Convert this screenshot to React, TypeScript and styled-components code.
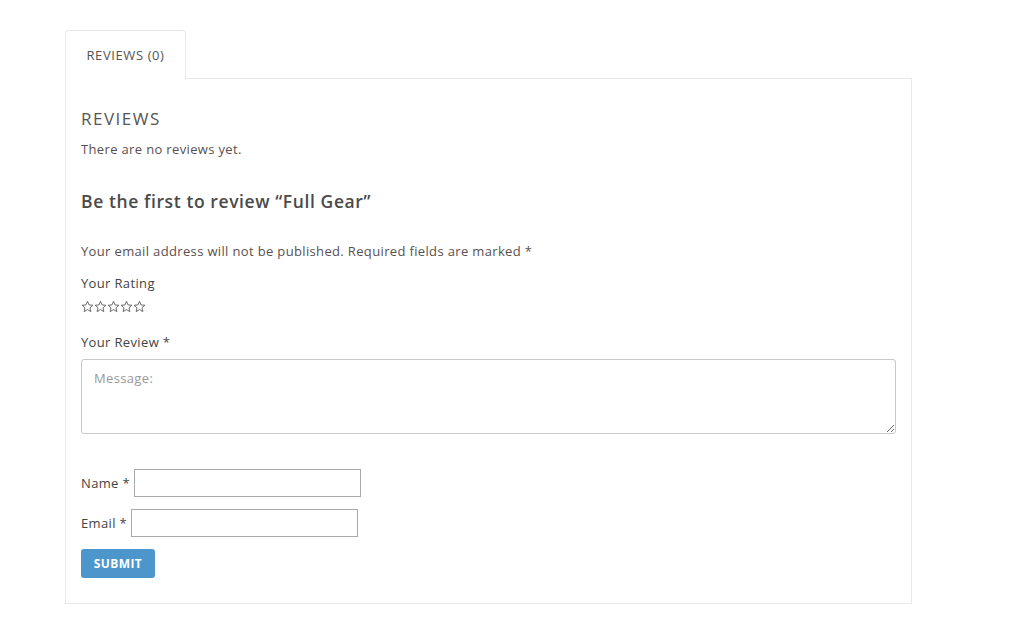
import React from "react";
import styled, { createGlobalStyle } from "styled-components";

const Global = createGlobalStyle`
  html, body { margin: 0; padding: 0; background: #fff; }
  body { font-family: "Open Sans", "Liberation Sans", sans-serif; color: #555; }
  * { box-sizing: border-box; }
`;

const Page = styled.div`
  padding: 30px 0 0 65px;
  width: 912px;
`;

const Tabs = styled.div`
  display: flex;
`;

const Tab = styled.div`
  width: 121px;
  height: 49px;
  border: 1px solid #e8e8e8;
  border-bottom: none;
  border-radius: 4px 4px 0 0;
  background: #fff;
  margin-bottom: -1px;
  position: relative;
  z-index: 1;
  display: flex;
  align-items: center;
  justify-content: center;
  font-size: 13px;
  color: #555;
  letter-spacing: 0.6px;
`;

const Panel = styled.div`
  border: 1px solid #e8e8e8;
  padding: 28px 15px 25px 15px;
  height: 526px;
`;

const Heading = styled.h2`
  margin: 0;
  font-size: 17px;
  font-weight: 400;
  color: #555;
  line-height: 24px;
  letter-spacing: 1.5px;
`;

const Text = styled.p<{ $mt?: number }>`
  margin: ${(p) => p.$mt ?? 0}px 0 0;
  font-size: 13px;
  line-height: 20px;
  color: #5a5050;
  letter-spacing: 0.35px;
`;

const SubHeading = styled.h3`
  margin: 30px 0 0;
  font-size: 17.5px;
  font-weight: 600;
  color: #4a4a4a;
  line-height: 24px;
  letter-spacing: 0.6px;
`;

const Label = styled.div<{ $mt: number }>`
  margin-top: ${(p) => p.$mt}px;
  font-size: 13px;
  line-height: 20px;
  color: #444;
  letter-spacing: 0.35px;
`;

const Stars = styled.div`
  display: flex;
  margin-top: 7px;
  height: 14px;
`;

const Textarea = styled.textarea`
  display: block;
  margin-top: 7px;
  width: 815px;
  height: 75px;
  border: 1px solid #c8c8c8;
  border-radius: 3px;
  padding: 9px 12px;
  font-family: "Open Sans", "Liberation Sans", sans-serif;
  font-size: 13px;
  letter-spacing: 0.35px;
  color: #555;
  resize: vertical;
  &::placeholder { color: #999; }
`;

const FieldRow = styled.div<{ $mt: number }>`
  display: flex;
  align-items: center;
  gap: 4px;
  margin-top: ${(p) => p.$mt}px;
  font-size: 13px;
  letter-spacing: 0.35px;
  color: #444;
`;

const Input = styled.input`
  width: 227px;
  height: 28px;
  border: 1px solid #a9a9a9;
  padding: 2px 4px;
  font-size: 13px;
`;

const Submit = styled.button`
  margin-top: 12px;
  width: 74px;
  height: 29px;
  background: #4c96cc;
  color: #fff;
  border: none;
  border-radius: 3px;
  font-family: "Open Sans", "Liberation Sans", sans-serif;
  font-weight: 700;
  font-size: 12px;
  letter-spacing: 0.4px;
`;

const Star = () => (
  <svg width="13" height="13" viewBox="0 0 24 24">
    <path
      d="M12 2.5l2.9 6.6 7.1.6-5.4 4.7 1.6 7-6.2-3.7-6.2 3.7 1.6-7L2 9.7l7.1-.6z"
      fill="none"
      stroke="#555"
      strokeWidth="1.6"
      strokeLinejoin="round"
    />
  </svg>
);

export default function App() {
  return (
    <>
      <Global />
      <Page>
        <Tabs>
          <Tab>REVIEWS (0)</Tab>
        </Tabs>
        <Panel>
          <Heading>REVIEWS</Heading>
          <Text $mt={8}>There are no reviews yet.</Text>
          <SubHeading>Be the first to review “Full Gear”</SubHeading>
          <Text $mt={28}>Your email address will not be published. Required fields are marked *</Text>
          <Label $mt={12}>Your Rating</Label>
          <Stars>
            <Star />
            <Star />
            <Star />
            <Star />
            <Star />
          </Stars>
          <Label $mt={18}>Your Review *</Label>
          <Textarea placeholder="Message:" />
          <FieldRow $mt={35}>
            Name * <Input />
          </FieldRow>
          <FieldRow $mt={12}>
            Email * <Input />
          </FieldRow>
          <Submit>SUBMIT</Submit>
        </Panel>
      </Page>
    </>
  );
}
